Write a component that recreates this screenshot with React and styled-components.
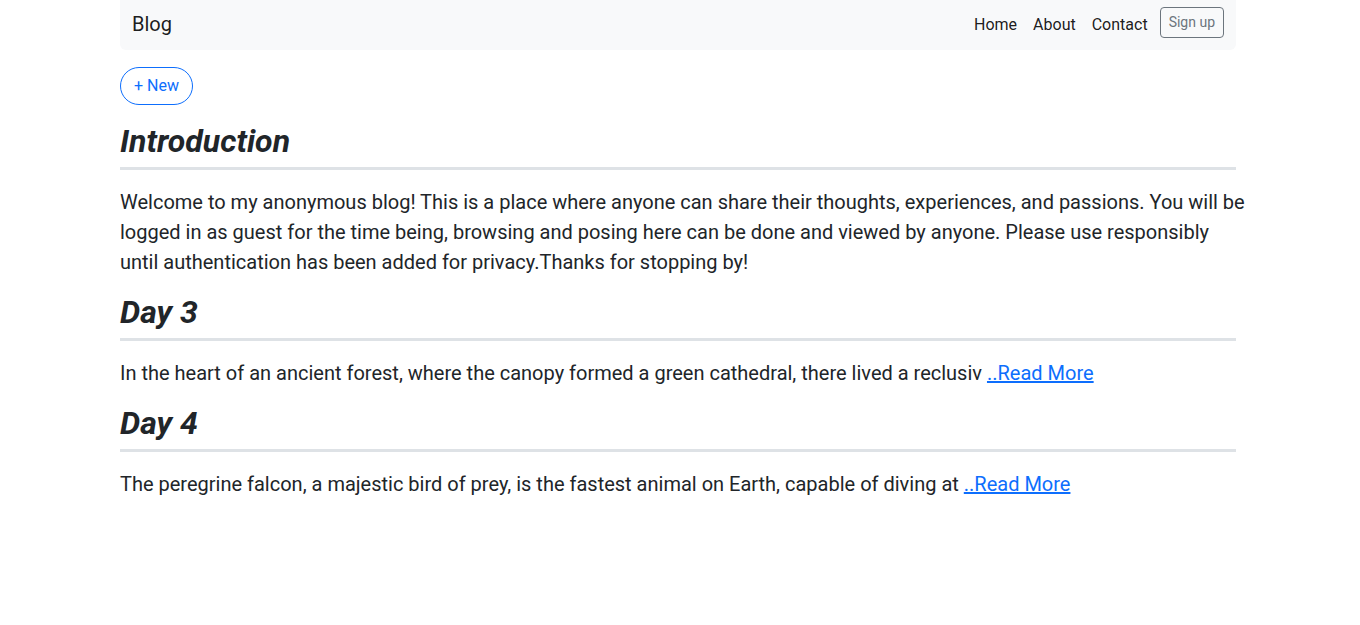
import React from 'react';
import styled, { createGlobalStyle } from 'styled-components';

const GlobalStyle = createGlobalStyle`
  body {
    margin: 0;
    background: #fff;
    color: #212529;
    font-family: Roboto, "Open Sans", sans-serif;
  }
`;

const Page = styled.div`
  width: 1116px;
  margin-left: 120px;
`;

const Navbar = styled.nav`
  height: 50px;
  background: #f8f9fa;
  border-radius: 0 0 6px 6px;
  display: flex;
  align-items: center;
  justify-content: space-between;
  padding: 0 12px;
`;

const Brand = styled.a`
  font-size: 20px;
  color: rgba(0, 0, 0, 0.9);
  text-decoration: none;
  margin-bottom: 2px;
`;

const NavList = styled.div`
  display: flex;
  align-items: center;
  margin-bottom: 5px;
`;

const NavLink = styled.a`
  font-size: 16px;
  color: rgba(0, 0, 0, 0.9);
  text-decoration: none;
  padding: 0 8px;
  margin-top: 3px;
`;

const SignUp = styled.button`
  font-family: inherit;
  font-size: 14px;
  line-height: 21px;
  color: #6c757d;
  background: transparent;
  border: 1px solid #6c757d;
  border-radius: 4px;
  padding: 4px 8px;
  margin-left: 4px;
`;

const NewButton = styled.button`
  display: block;
  font-family: inherit;
  font-size: 16px;
  line-height: 24px;
  color: #0d6efd;
  background: transparent;
  border: 1px solid #0d6efd;
  border-radius: 50rem;
  padding: 6px 13px;
  margin: 17px 0 17px;
`;

const Post = styled.article`
  margin-bottom: 16px;
`;

const Title = styled.h2`
  font-size: 32px;
  font-weight: 700;
  font-style: italic;
  line-height: 38px;
  margin: 0 0 17px;
  padding-bottom: 7px;
  border-bottom: 3px solid #dee2e6;
`;

const Body = styled.p`
  font-size: 20px;
  line-height: 30px;
  margin: 0 -14px 0 0;
`;

const ReadMore = styled.a`
  color: #0d6efd;
  text-decoration: underline;
`;

const posts = [
  {
    title: 'Introduction',
    text: 'Welcome to my anonymous blog! This is a place where anyone can share their thoughts, experiences, and passions. You will be logged in as guest for the time being, browsing and posing here can be done and viewed by anyone. Please use responsibly until authentication has been added for privacy.Thanks for stopping by!',
  },
  {
    title: 'Day 3',
    text: 'In the heart of an ancient forest, where the canopy formed a green cathedral, there lived a reclusiv',
    more: true,
  },
  {
    title: 'Day 4',
    text: 'The peregrine falcon, a majestic bird of prey, is the fastest animal on Earth, capable of diving at',
    more: true,
  },
];

export default function App() {
  return (
    <Page>
      <GlobalStyle />
      <Navbar>
        <Brand href="#">Blog</Brand>
        <NavList>
          <NavLink href="#">Home</NavLink>
          <NavLink href="#">About</NavLink>
          <NavLink href="#">Contact</NavLink>
          <SignUp>Sign up</SignUp>
        </NavList>
      </Navbar>
      <NewButton>+ New</NewButton>
      {posts.map((p) => (
        <Post key={p.title}>
          <Title>{p.title}</Title>
          <Body>
            {p.text}
            {p.more && <> <ReadMore href="#">..Read More</ReadMore></>}
          </Body>
        </Post>
      ))}
    </Page>
  );
}
